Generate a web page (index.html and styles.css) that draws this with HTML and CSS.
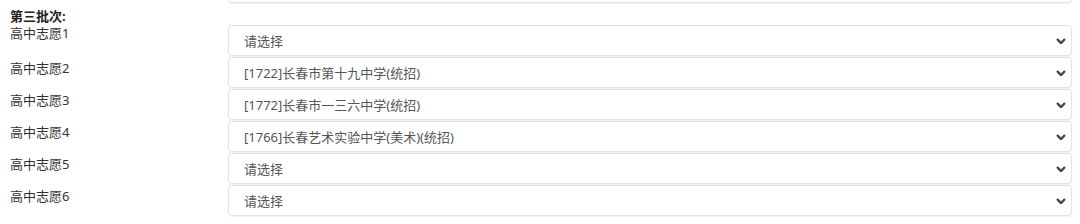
FILE: index.html
```html
<!DOCTYPE html>
<html lang="zh-CN">
<head>
    <meta charset="UTF-8">
    <title>志愿填报</title>
    <link rel="stylesheet" href="styles.css">
</head>
<body>
    <div class="form">
        <div class="row row-prev">
            <div class="label"></div>
            <div class="select-wrap">
                <select class="select"><option>请选择</option></select>
            </div>
        </div>

        <div class="batch-title">第三批次:</div>

        <div class="row">
            <div class="label label-first">高中志愿1</div>
            <div class="select-wrap">
                <select class="select"><option>请选择</option></select>
                <svg class="chevron" viewBox="0 0 10 6"><path d="M1 1 L5 5 L9 1" /></svg>
            </div>
        </div>
        <div class="row">
            <div class="label">高中志愿2</div>
            <div class="select-wrap">
                <select class="select"><option>[1722]长春市第十九中学(统招)</option></select>
                <svg class="chevron" viewBox="0 0 10 6"><path d="M1 1 L5 5 L9 1" /></svg>
            </div>
        </div>
        <div class="row">
            <div class="label">高中志愿3</div>
            <div class="select-wrap">
                <select class="select"><option>[1772]长春市一三六中学(统招)</option></select>
                <svg class="chevron" viewBox="0 0 10 6"><path d="M1 1 L5 5 L9 1" /></svg>
            </div>
        </div>
        <div class="row">
            <div class="label">高中志愿4</div>
            <div class="select-wrap">
                <select class="select"><option>[1766]长春艺术实验中学(美术)(统招)</option></select>
                <svg class="chevron" viewBox="0 0 10 6"><path d="M1 1 L5 5 L9 1" /></svg>
            </div>
        </div>
        <div class="row">
            <div class="label">高中志愿5</div>
            <div class="select-wrap">
                <select class="select"><option>请选择</option></select>
                <svg class="chevron" viewBox="0 0 10 6"><path d="M1 1 L5 5 L9 1" /></svg>
            </div>
        </div>
        <div class="row">
            <div class="label">高中志愿6</div>
            <div class="select-wrap">
                <select class="select"><option>请选择</option></select>
                <svg class="chevron" viewBox="0 0 10 6"><path d="M1 1 L5 5 L9 1" /></svg>
            </div>
        </div>
    </div>
</body>
</html>
```

FILE: styles.css
```css
body {
    margin: 0;
    background: #fff;
    font-family: "Noto Sans", "Noto Sans CJK SC", sans-serif;
    font-size: 13px;
    color: #333;
}
.form {
    margin-top: -28px;
    padding: 0 8px 0 10px;
}
.row {
    display: flex;
    align-items: flex-start;
    margin-bottom: 1px;
}
.row-prev {
    margin-bottom: 0;
}
.label {
    width: 218px;
    flex: none;
    padding-top: 2px;
    line-height: 18px;
    color: #333;
}
.label-first {
    padding-top: 0;
    margin-top: -1px;
}
.batch-title {
    font-weight: bold;
    line-height: 18px;
    padding: 4px 0 0;
    color: #222;
}
.select-wrap {
    position: relative;
    flex: 1;
}
.select {
    display: block;
    width: 100%;
    height: 31px;
    padding: 0 30px 0 15px;
    font-family: inherit;
    font-size: 13px;
    color: #555;
    background: #fff;
    border: 1px solid #e3e3e3;
    border-radius: 4px;
    box-shadow: 0 1px 2px rgba(0,0,0,0.06);
    -webkit-appearance: none;
    appearance: none;
    outline: none;
}
.chevron {
    position: absolute;
    right: 6px;
    top: 13px;
    width: 10px;
    height: 6px;
    fill: none;
    stroke: #444;
    stroke-width: 2.4;
    pointer-events: none;
}
```
